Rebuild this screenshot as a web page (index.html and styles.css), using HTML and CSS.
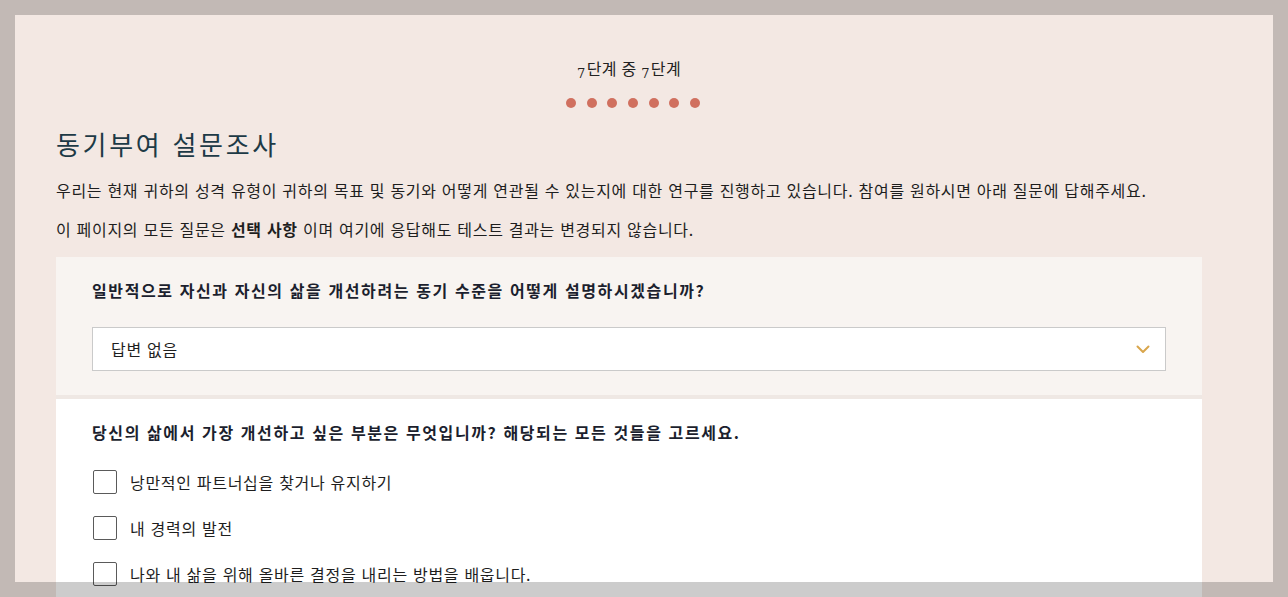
FILE: index.html
```html
<!DOCTYPE html>
<html lang="ko">
<head>
<meta charset="utf-8">
<title>동기부여 설문조사</title>
<link rel="stylesheet" href="styles.css">
</head>
<body>
<div class="page">
  <div class="stepper">
    <div class="step-label"><span class="num">7</span>단계 중 <span class="num">7</span>단계</div>
    <div class="dots">
      <span class="dot"></span><span class="dot"></span><span class="dot"></span><span class="dot"></span><span class="dot"></span><span class="dot"></span><span class="dot"></span>
    </div>
  </div>
  <h1 class="title">동기부여 설문조사</h1>
  <p class="intro">우리는 현재 귀하의 성격 유형이 귀하의 목표 및 동기와 어떻게 연관될 수 있는지에 대한 연구를 진행하고 있습니다. 참여를 원하시면 아래 질문에 답해주세요.</p>
  <p class="intro">이 페이지의 모든 질문은 <strong>선택 사항</strong> 이며 여기에 응답해도 테스트 결과는 변경되지 않습니다.</p>

  <section class="card card-muted">
    <h2 class="question">일반적으로 자신과 자신의 삶을 개선하려는 동기 수준을 어떻게 설명하시겠습니까?</h2>
    <div class="select">
      <span>답변 없음</span>
      <svg class="chev" width="14" height="9" viewBox="0 0 14 9"><path d="M1.5 1.5 L7 7 L12.5 1.5" fill="none" stroke="#d9a64c" stroke-width="2" stroke-linecap="round" stroke-linejoin="round"/></svg>
    </div>
  </section>

  <section class="card card-white">
    <h2 class="question">당신의 삶에서 가장 개선하고 싶은 부분은 무엇입니까? 해당되는 모든 것들을 고르세요.</h2>
    <label class="check"><span class="box"></span><span>낭만적인 파트너십을 찾거나 유지하기</span></label>
    <label class="check"><span class="box"></span><span>내 경력의 발전</span></label>
    <label class="check"><span class="box"></span><span>나와 내 삶을 위해 올바른 결정을 내리는 방법을 배웁니다.</span></label>
  </section>
</div>
<div class="spotlight"></div>
</body>
</html>
```

FILE: styles.css
```css
html, body {
  margin: 0;
  padding: 0;
}
body {
  background: #f3e8e3;
  font-family: "Noto Sans CJK KR", "Noto Sans", sans-serif;
  color: #1e1e1e;
  height: 597px;
  overflow: hidden;
}
.page {
  padding: 57px 86px 0 56px;
}
.stepper {
  display: flex;
  flex-direction: column;
  align-items: center;
}
.step-label {
  font-size: 16px;
  line-height: 22px;
  color: #222;
  letter-spacing: 0.3px;
}
.num {
  font-family: "DejaVu Serif", serif;
  font-size: 13px;
  position: relative;
  top: 3px;
  margin-right: 1px;
}
.dots {
  display: flex;
  gap: 10.7px;
  margin-top: 16px;
  padding-left: 8px;
}
.dot {
  width: 10px;
  height: 10px;
  border-radius: 50%;
  background: #d0705f;
}
.title {
  margin: 18px 0 0 0;
  font-size: 26px;
  line-height: 36px;
  font-weight: 400;
  letter-spacing: 2.7px;
  color: #1d3a46;
}
.intro {
  margin: 15px 0 0 0;
  font-size: 16px;
  line-height: 27px;
  color: #1e1e1e;
  letter-spacing: 0.7px;
}
.intro + .intro {
  margin-top: 12px;
}
.intro strong {
  font-weight: 700;
}
.card {
  padding: 22px 36px 24px 36px;
}
.card-muted {
  margin-top: 14px;
  background: #f8f4f1;
  border-bottom: 4px solid #efe8e4;
}
.card-white {
  background: #ffffff;
  padding-top: 22px;
}
.question {
  margin: 0;
  font-size: 16px;
  line-height: 22px;
  font-weight: 700;
  color: #1c1f2e;
  letter-spacing: 1.6px;
}
.select {
  margin-top: 26px;
  height: 44px;
  box-sizing: border-box;
  border: 1px solid #cacaca;
  background: #fff;
  display: flex;
  align-items: center;
  justify-content: space-between;
  padding: 0 15px 0 18px;
  font-size: 16px;
  letter-spacing: 0.7px;
  color: #1e1e1e;
}
.chev {
  display: block;
}
.check {
  display: flex;
  align-items: center;
  gap: 13px;
  margin-top: 27px;
  font-size: 16px;
  color: #1e1e1e;
  letter-spacing: 0.7px;
}
.check + .check {
  margin-top: 22px;
}
.box {
  width: 24px;
  height: 24px;
  box-sizing: border-box;
  border: 1px solid #5a5a5a;
  border-radius: 2px;
  background: #fff;
  flex: none;
  margin-left: 1px;
}
.spotlight {
  position: fixed;
  left: 15px;
  top: 15px;
  width: 1258px;
  height: 567px;
  box-shadow: 0 0 0 3000px rgba(0, 0, 0, 0.2);
  pointer-events: none;
}
```
